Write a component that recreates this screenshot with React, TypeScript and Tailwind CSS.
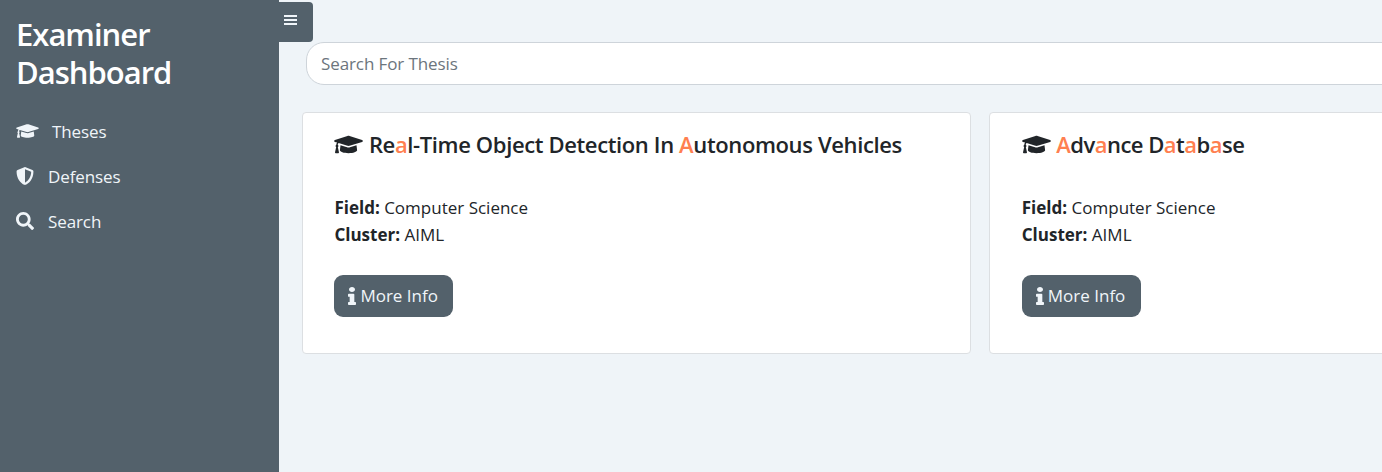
import { FaGraduationCap, FaShieldAlt, FaSearch, FaInfo } from "react-icons/fa";

function MenuIcon() {
  return (
    <svg width="13" height="10" viewBox="0 0 13 10" fill="currentColor" shapeRendering="crispEdges">
      <rect width="13" height="2" />
      <rect y="4" width="13" height="2" />
      <rect y="8" width="13" height="2" />
    </svg>
  );
}

function Highlighted({ text }: { text: string }) {
  return (
    <>
      {text.split(/(a)/i).map((part, i) =>
        part.toLowerCase() === "a" ? (
          <span key={i} className="text-[#ff7f50]">{part}</span>
        ) : (
          part
        ),
      )}
    </>
  );
}

function ThesisCard({ title, tracking }: { title: string; tracking: string }) {
  return (
    <article className="h-[242px] w-[669px] shrink-0 rounded-[4px] border border-[#dcdfe2] bg-white pt-[16px] pl-[31.4px]">
      <h5 className="flex h-[30px] items-center whitespace-nowrap">
        <FaGraduationCap className="mr-[5.5px] h-[23px] w-[29px]" />
        <span className={`text-[22px] font-semibold ${tracking}`}>
          <Highlighted text={title} />
        </span>
      </h5>
      <div className="mt-[35px] text-[17px] leading-[27px]">
        <p><b>Field:</b> Computer Science</p>
        <p><b>Cluster:</b> AIML</p>
      </div>
      <button className="mt-[27px] flex h-[42px] w-[119px] items-center rounded-[9px] bg-[#53616b] pl-[14px] text-[17px] text-[#f0f5f9]">
        <FaInfo preserveAspectRatio="none" className="mr-[4px] h-[18px] w-[8px]" />
        <span className="whitespace-nowrap">More Info</span>
      </button>
    </article>
  );
}

export default function App() {
  return (
    <div className="flex h-[472px] w-full overflow-hidden bg-[#eff4f8] font-['Open_Sans',sans-serif] text-[#212529]">
      <aside className="w-[279px] shrink-0 bg-[#53616b] pt-[16px] pl-4 text-[#f0f5f9]">
        <h2 className="text-[31px] leading-[37.5px] font-semibold tracking-[-1px] text-white">
          <span className="block">Examiner</span>
          <span className="block">Dashboard</span>
        </h2>
        <nav className="mt-[17px] text-[17px] tracking-[-0.1px]">
          <a className="flex h-[45px] items-center"><FaGraduationCap className="mr-[13px] h-[18px] w-[23px]" /><span className="pt-[2px]">Theses</span></a>
          <a className="flex h-[45px] items-center"><FaShieldAlt className="mr-[14px] size-[18px]" /><span className="pt-[2px]">Defenses</span></a>
          <a className="flex h-[45px] items-center"><FaSearch className="mr-[14px] size-[18px]" /><span className="pt-[2px]">Search</span></a>
        </nav>
      </aside>
      <main className="min-w-0 flex-1">
        <button className="mt-[2px] flex h-[40px] w-[34px] rounded-r-[4px] bg-[#53616b] pt-[13px] pl-[5px] text-[#f0f5f9]">
          <MenuIcon />
        </button>
        <div className="ml-[27px] flex h-[43px] w-[1400px] items-center rounded-[18px] border border-[#ced4da] bg-white pl-[14px] text-[17px] tracking-[-0.1px] text-[#6c757d]">
          <span>Search For Thesis</span>
        </div>
        <div className="mt-[27px] ml-[23px] flex gap-[18.4px]">
          <ThesisCard title="Real-Time Object Detection In Autonomous Vehicles" tracking="tracking-[-0.37px]" />
          <ThesisCard title="Advance Database" tracking="tracking-[-0.52px]" />
        </div>
      </main>
    </div>
  );
}
